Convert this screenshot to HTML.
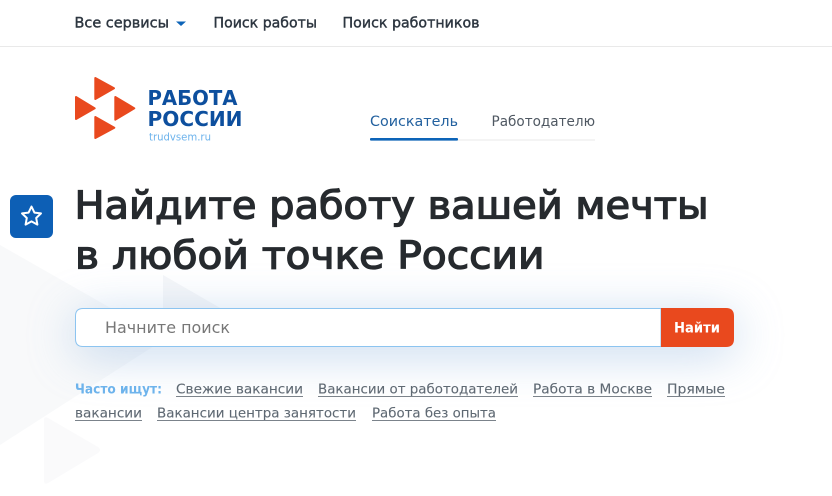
<!DOCTYPE html>
<html lang="ru"><head><meta charset="utf-8"><title>Работа России</title>
<style>
html,body{margin:0;padding:0;width:832px;height:496px;overflow:hidden;background:#fff}
svg{display:block}
text{font-family:"DejaVu Sans","Liberation Sans",sans-serif}
.nav{font-size:14px;fill:#2d3640;stroke:#2d3640;stroke-width:.4px}
.h{font-size:38.5px;fill:#262a2e;stroke:#262a2e;stroke-width:1.3px}
.l{font-size:13.5px;fill:#5f6973;stroke:#5f6973;stroke-width:.1px}
.logo{font-size:20px;font-weight:700;fill:#0d4f9e}
</style></head><body>
<svg width="832" height="496" viewBox="0 0 832 496" xmlns="http://www.w3.org/2000/svg">
<defs>
<filter id="glow" x="-20%" y="-300%" width="140%" height="700%"><feGaussianBlur stdDeviation="24"/></filter>
</defs>
<rect width="832" height="496" fill="#fff"/>
<!-- background triangles -->
<path d="M0 245L165 339L0 445Z" fill="#f8f9fa"/>
<path d="M163 275L222 309L163 342Z" fill="#f5f6f8"/>
<path d="M44 420Q44 416 48 418L98 447Q102 450 98 453L48 483Q44 485 44 481Z" fill="#fafafb"/>
<!-- search glow -->
<rect x="75" y="316" width="660" height="38" rx="10" fill="#9dbde2" opacity=".62" filter="url(#glow)"/>
<!-- top nav -->
<rect x="0" y="46" width="832" height="1" fill="#e9e9e9"/>
<text class="nav" x="74.500" y="27.500" textLength="94.500" lengthAdjust="spacingAndGlyphs">Все сервисы</text>
<path d="M176 21.500H186L181 26Z" fill="#0d64b8"/>
<text class="nav" x="213.500" y="27.500" textLength="103.500" lengthAdjust="spacingAndGlyphs">Поиск работы</text>
<text class="nav" x="342.500" y="27.500" textLength="137" lengthAdjust="spacingAndGlyphs">Поиск работников</text>
<!-- logo -->
<g fill="#e9491e" stroke="#e9491e" stroke-width="2" stroke-linejoin="round">
<path d="M95.300 78L114 88.300L95.300 99Z"/>
<path d="M76 97L94.700 108.300L76 119Z"/>
<path d="M115.300 97L134.300 108.300L115.300 119.700Z"/>
<path d="M95.300 117L114.300 127.700L95.300 138Z"/>
</g>
<text class="logo" x="147.500" y="104.800" textLength="90" lengthAdjust="spacingAndGlyphs">РАБОТА</text>
<text class="logo" x="147.500" y="125.800" textLength="95" lengthAdjust="spacingAndGlyphs">РОССИИ</text>
<text x="149" y="140.500" font-size="11" fill="#6db3ec" textLength="62" lengthAdjust="spacingAndGlyphs">trudvsem.ru</text>
<!-- tabs -->
<text x="370" y="126" font-size="14" fill="#23619f" textLength="88" lengthAdjust="spacingAndGlyphs">Соискатель</text>
<text x="491.500" y="126" font-size="14" fill="#4f5862" textLength="103.500" lengthAdjust="spacingAndGlyphs">Работодателю</text>
<rect x="370" y="139.500" width="225" height="1" fill="#e8e8e8"/>
<rect x="370" y="138" width="88" height="2.600" rx="1" fill="#0d64b8"/>
<!-- star button -->
<rect x="10" y="195" width="43" height="43" rx="6" fill="#0d5fb5"/>
<path d="M31.500 206.500L34.400 212.600L41 213.400L36.200 218L37.400 224.600L31.500 221.400L25.600 224.600L26.800 218L22 213.400L28.600 212.600Z" fill="none" stroke="#fff" stroke-width="2" stroke-linejoin="round"/>
<!-- heading -->
<text class="h" x="74.500" y="218.300" textLength="634" lengthAdjust="spacingAndGlyphs">Найдите работу вашей мечты</text>
<text class="h" x="75" y="268.300" textLength="469.500" lengthAdjust="spacingAndGlyphs">в любой точке России</text>
<!-- search -->
<path d="M83 308.500H661V346.500H83Q75.500 346.500 75.500 339V316Q75.500 308.500 83 308.500Z" fill="#fff" stroke="#8cc4f0"/>
<path d="M661 308H726Q734 308 734 316V339Q734 347 726 347H661Z" fill="#e9491e"/>
<text x="105" y="333" font-size="16" fill="#777" textLength="125" lengthAdjust="spacingAndGlyphs">Начните поиск</text>
<text x="674" y="332.500" font-size="14" font-weight="700" fill="#fff" textLength="46" lengthAdjust="spacingAndGlyphs">Найти</text>
<!-- frequent links -->
<text x="75" y="393.500" font-size="13.500" font-weight="700" fill="#6db3ec" textLength="87" lengthAdjust="spacingAndGlyphs">Часто ищут:</text>
<text class="l" x="176" y="393.500" textLength="127" lengthAdjust="spacingAndGlyphs">Свежие вакансии</text>
<text class="l" x="318" y="393.500" textLength="200" lengthAdjust="spacingAndGlyphs">Вакансии от работодателей</text>
<text class="l" x="533" y="393.500" textLength="119" lengthAdjust="spacingAndGlyphs">Работа в Москве</text>
<text class="l" x="667" y="393.500" textLength="58" lengthAdjust="spacingAndGlyphs">Прямые</text>
<text class="l" x="75" y="417.500" textLength="67" lengthAdjust="spacingAndGlyphs">вакансии</text>
<text class="l" x="157" y="417.500" textLength="199" lengthAdjust="spacingAndGlyphs">Вакансии центра занятости</text>
<text class="l" x="372" y="417.500" textLength="124" lengthAdjust="spacingAndGlyphs">Работа без опыта</text>
<g fill="#7b838b">
<rect x="176" y="396" width="127" height="1"/>
<rect x="318" y="396" width="200" height="1"/>
<rect x="533" y="396" width="119" height="1"/>
<rect x="667" y="396" width="58" height="1"/>
<rect x="75" y="420" width="67" height="1"/>
<rect x="157" y="420" width="199" height="1"/>
<rect x="372" y="420" width="124" height="1"/>
</g>
</svg>
</body></html>
